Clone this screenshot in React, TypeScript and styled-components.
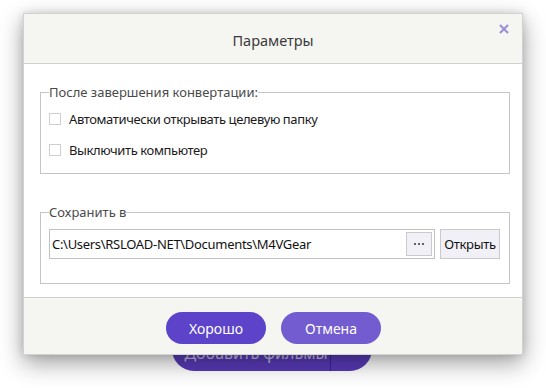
import React from "react";
import styled, { createGlobalStyle } from "styled-components";

const Global = createGlobalStyle`
  html, body { margin: 0; padding: 0; background: #ffffff; }
  body { width: 546px; height: 388px; overflow: hidden; font-family: "Noto Sans", "Segoe UI", sans-serif; }
  * { box-sizing: border-box; }
`;

const Page = styled.div`
  position: relative;
  width: 546px;
  height: 388px;
  display: flex;
  flex-direction: column;
  align-items: flex-start;
  padding: 327px 0 0 172px;
`;

const AddButton = styled.div`
  width: 200px;
  height: 44px;
  border-radius: 22px;
  background: linear-gradient(180deg, #6a4fd0 0%, #5637b6 100%);
  display: flex;
  align-items: center;
  color: #cbc4e6;
  font-size: 16px;
`;

const AddLabel = styled.span`
  flex: 1;
  text-align: center;
  padding: 8px 0 0 10px;
`;

const AddDivider = styled.span`
  width: 1px;
  align-self: stretch;
  background: #3e2392;
`;

const AddPlus = styled.span`
  width: 41px;
  text-align: center;
  font-size: 24px;
  font-weight: 700;
  padding-bottom: 6px;
`;

const Dialog = styled.div`
  position: absolute;
  left: 23px;
  top: 13px;
  width: 500px;
  height: 342px;
  background: #ffffff;
  border: 1px solid #d2d2d2;
  display: flex;
  flex-direction: column;
  box-shadow: 0 8px 22px rgba(0, 0, 0, 0.38), 0 0 8px rgba(0, 0, 0, 0.12);
`;

const Header = styled.div`
  position: relative;
  height: 50px;
  flex: none;
  background: #f5f5f1;
  border-bottom: 1px solid #d0d0d0;
  display: flex;
  align-items: center;
  justify-content: center;
  font-size: 14.5px;
  color: #3a3a3a;
  padding-top: 3px;
`;

const Close = styled.span`
  position: absolute;
  right: 13px;
  top: 10px;
  width: 10px;
  height: 10px;
  display: flex;
`;

const Body = styled.div`
  flex: 1;
  display: flex;
  flex-direction: column;
  padding: 20px 12px 0 16px;
`;

const Group = styled.fieldset<{ $h: number; $mt: number }>`
  margin: ${(p) => p.$mt}px 0 0 0;
  padding: 0 0 0 8px;
  border: 1px solid #c4c4c4;
  height: ${(p) => p.$h}px;
  min-width: 0;
`;

const Legend = styled.legend`
  padding: 0;
  margin-left: 0;
  font-size: 13px;
  line-height: 17px;
  color: #4a4a4a;
`;

const CheckRow = styled.label<{ $mt: number }>`
  display: flex;
  align-items: center;
  gap: 8px;
  margin-top: ${(p) => p.$mt}px;
  font-size: 13px;
  line-height: 18px;
  letter-spacing: -0.4px;
  color: #1a1a1a;
`;

const Box = styled.span`
  width: 12px;
  height: 12px;
  border: 1px solid #cfcfcf;
  background: #fff;
  flex: none;
`;

const PathRow = styled.div`
  display: flex;
  align-items: center;
  gap: 5px;
  margin-top: 8px;
  padding-right: 9px;
`;

const PathInput = styled.div`
  flex: 1;
  height: 30px;
  border: 1px solid #c2c2c2;
  display: flex;
  align-items: center;
  padding: 0 2px 0 2px;
  font-size: 13px;
  letter-spacing: -0.3px;
  color: #111;
`;

const PathText = styled.span`
  flex: 1;
  white-space: nowrap;
`;

const Dots = styled.span`
  width: 26px;
  height: 24px;
  border: 1px solid #cacaca;
  background: #f1f0f6;
  display: flex;
  align-items: center;
  justify-content: center;
  gap: 2px;
`;

const Dot = styled.span`
  width: 2px;
  height: 2px;
  border-radius: 1px;
  background: #333;
`;

const OpenBtn = styled.span`
  width: 60px;
  height: 30px;
  border: 1px solid #cacaca;
  background: #f1f0f6;
  display: flex;
  align-items: center;
  justify-content: center;
  font-size: 13px;
  letter-spacing: -0.3px;
  color: #111;
`;

const Footer = styled.div`
  height: 57px;
  flex: none;
  background: #f5f5f1;
  border-top: 1px solid #cfcfcf;
  display: flex;
  justify-content: center;
  align-items: flex-start;
  gap: 15px;
  padding-top: 14px;
  padding-left: 1px;
`;

const Action = styled.span<{ $bg: string }>`
  width: 100px;
  height: 32px;
  border-radius: 16px;
  background: ${(p) => p.$bg};
  color: #fff;
  display: flex;
  align-items: center;
  justify-content: center;
  font-size: 14px;
`;

export default function App() {
  return (
    <>
      <Global />
      <Page>
        <AddButton>
          <AddLabel>Добавить фильмы</AddLabel>
          <AddDivider />
          <AddPlus>+</AddPlus>
        </AddButton>
        <Dialog>
          <Header>
            Параметры
            <Close>
              <svg width="10" height="10" viewBox="0 0 10 10">
                <path d="M1 1L9 9M9 1L1 9" stroke="#9d90d6" strokeWidth="2.2" />
              </svg>
            </Close>
          </Header>
          <Body>
            <Group $h={90} $mt={0}>
              <Legend>После завершения конвертации:</Legend>
              <CheckRow $mt={9}>
                <Box />
                Автоматически открывать целевую папку
              </CheckRow>
              <CheckRow $mt={13}>
                <Box />
                Выключить компьютер
              </CheckRow>
            </Group>
            <Group $h={80} $mt={30}>
              <Legend>Сохранить в</Legend>
              <PathRow>
                <PathInput>
                  <PathText>C:\Users\RSLOAD-NET\Documents\M4VGear</PathText>
                  <Dots>
                    <Dot />
                    <Dot />
                    <Dot />
                  </Dots>
                </PathInput>
                <OpenBtn>Открыть</OpenBtn>
              </PathRow>
            </Group>
          </Body>
          <Footer>
            <Action $bg="#5c43c9">Хорошо</Action>
            <Action $bg="#735bd0">Отмена</Action>
          </Footer>
        </Dialog>
      </Page>
    </>
  );
}
